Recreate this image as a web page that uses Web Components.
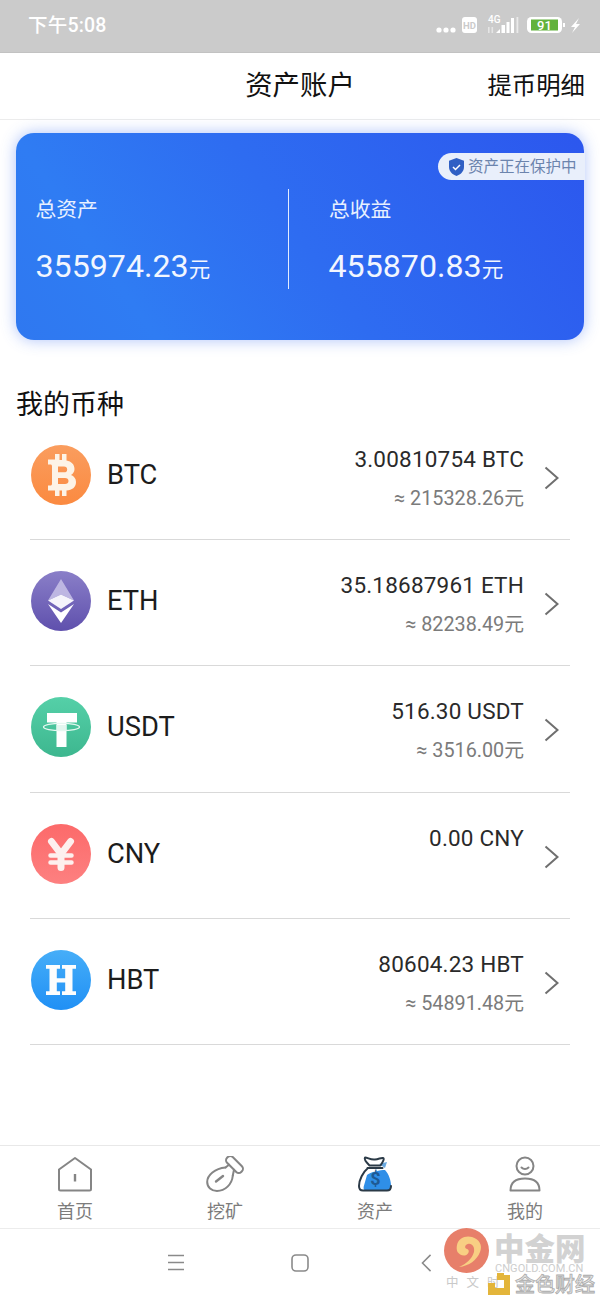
<!DOCTYPE html>
<html lang="zh"><head><meta charset="utf-8"><title>资产账户</title>
<style>
html,body{margin:0;padding:0;background:#fff}
body{width:600px;height:1300px;overflow:hidden;position:relative;font-family:Roboto,"Noto Sans CJK SC",sans-serif;color:#1d1d1d}
</style></head><body>
<status-bar></status-bar>
<app-header></app-header>
<asset-card></asset-card>
<section-title>我的币种</section-title>
<coin-list>
<coin-row name="BTC" amount="3.00810754 BTC" approx="≈ 215328.26元">
<svg slot="icon" viewBox="0 0 60 60" width="60" height="60"><defs><linearGradient id="g1" x1="0" y1="0" x2="0" y2="1"><stop offset="0" stop-color="#fa9d5e"/><stop offset="1" stop-color="#fb8a40"/></linearGradient></defs><circle cx="30" cy="30" r="30" fill="url(#g1)"/><path fill="#fdf3e6" fill-rule="evenodd" d="M24 9h4.500v6h2.500V9h4.500v6.500c5 1 8 4 8 8.500 0 2.800-1.500 4.800-3.500 6 3 1.200 5 3.500 5 7 0 5.500-4 8-9.500 8.500V51H31v-5.500h-2.500V51H24v-5.500h-7v-5h2.500c.8 0 1.500-.7 1.500-1.500V21c0-.8-.7-1.500-1.500-1.500H17v-5h7zM27 21.500v5.800h6c2 0 3.200-1 3.200-2.900s-1.200-2.900-3.200-2.900zM27 33v6h7c2.200 0 3.500-1.200 3.500-3s-1.300-3-3.500-3z"/></svg>
</coin-row>
<coin-row name="ETH" amount="35.18687961 ETH" approx="≈ 82238.49元">
<svg slot="icon" viewBox="0 0 60 60" width="60" height="60"><defs><linearGradient id="g2" x1="0" y1="0" x2="0" y2="1"><stop offset="0" stop-color="#8a7fc8"/><stop offset="1" stop-color="#5f50ad"/></linearGradient></defs><circle cx="30" cy="30" r="30" fill="url(#g2)"/><path fill="#bdb6e2" d="M30 8 17 29.500 30 23.500 43 29.500z"/><path fill="#f5f4fb" d="M30 23.500 17 29.500 30 38 43 29.500z"/><path fill="#fff" d="M17 33 30 41.500 43 33 30 52z"/></svg>
</coin-row>
<coin-row name="USDT" amount="516.30 USDT" approx="≈ 3516.00元">
<svg slot="icon" viewBox="0 0 60 60" width="60" height="60"><defs><linearGradient id="g3" x1="0" y1="0" x2="0" y2="1"><stop offset="0" stop-color="#55d0a8"/><stop offset="1" stop-color="#3db78f"/></linearGradient></defs><circle cx="30" cy="30" r="30" fill="url(#g3)"/><path fill="#fff" d="M16 16h30v9.500H35.500V50h-10V25.500H16z"/><ellipse cx="30.500" cy="30" rx="18" ry="3.700" fill="none" stroke="#e6f8f1" stroke-width="1.300"/><path fill="#e3f6ef" d="M25.500 28h10v5h-10z"/></svg>
</coin-row>
<coin-row name="CNY" amount="0.00 CNY">
<svg slot="icon" viewBox="0 0 60 60" width="60" height="60"><defs><linearGradient id="g4" x1="0" y1="0" x2="0" y2="1"><stop offset="0" stop-color="#fc6a6a"/><stop offset="1" stop-color="#fd8080"/></linearGradient></defs><circle cx="30" cy="30" r="30" fill="url(#g4)"/><path fill="none" stroke="#fdf0ee" stroke-width="7" stroke-linecap="round" stroke-linejoin="round" d="M20.500 17.500 30 30l9.500-12.500M30 30v13.500"/><path fill="none" stroke="#fdf0ee" stroke-width="4.500" stroke-linecap="round" d="M19.500 31.500h21M19.500 38.500h21"/></svg>
</coin-row>
<coin-row name="HBT" amount="80604.23 HBT" approx="≈ 54891.48元">
<svg slot="icon" viewBox="0 0 60 60" width="60" height="60"><defs><linearGradient id="g5" x1="0" y1="0" x2="0" y2="1"><stop offset="0" stop-color="#46aef8"/><stop offset="1" stop-color="#2090f5"/></linearGradient></defs><circle cx="30" cy="30" r="30" fill="url(#g5)"/><path fill="#fdfdfd" d="M15 15h14v3.800h-3.200v9.400h8.400v-9.400H31V15h14v3.800h-3.500v22.400H45V45H31v-3.800h3.200v-8.600h-8.400v8.600H29V45H15v-3.800h3.500V18.800H15z"/></svg>
</coin-row>
</coin-list>
<tab-bar>
<tab-item label="首页"><svg slot="icon" viewBox="0 0 36 36" width="36" height="36" fill="none" stroke="#858585" stroke-width="2" stroke-linejoin="round"><path d="M2 13.500 18 2l16 11.500V33a1.500 1.500 0 0 1-1.500 1.500h-29A1.500 1.500 0 0 1 2 33z"/><path d="M18 18v7.500" stroke-width="2.400"/></svg></tab-item>
<tab-item label="挖矿"><svg slot="icon" viewBox="0 0 38 36" width="38" height="36" fill="none" stroke="#858585" stroke-width="2" stroke-linejoin="round" stroke-linecap="round"><path d="M19.500 11.500C9 12.500 1.200 19 1.200 26c0 5.500 4.300 9 9.800 9 8 0 15-6.500 15.800-15.500"/><path d="M19.500 11.500 23 8.700M26.800 19.500 28 13.700"/><rect x="18.500" y="4.500" width="20" height="8" rx="3.500" transform="rotate(45 28.500 8.500)"/><path d="M17 20l-7 5.500" stroke-width="2.400"/></svg></tab-item>
<tab-item label="资产"><svg slot="icon" viewBox="0 0 34 36" width="34" height="36"><path fill="#2f8fe8" d="M9 19c3-3 14-5 18-5 4 4 6 11 6 16 0 3-2 4.500-4 4.500H8c-2 0-3-2-2-5z"/><path fill="#6aa9e0" d="M21 8l8-2-2 6z"/><path fill="none" stroke="#2b3a47" stroke-width="2" stroke-linejoin="round" d="M7 1.500c3 0 5 2.500 10 2 4-.4 6-2 8-1.500 1.500.400.500 3-2.500 7.500h-11C9 7 6 3 7 1.500z"/><path fill="none" stroke="#2b3a47" stroke-width="2" stroke-linecap="round" d="M9.500 12h15M10 12C5 16 1 24 1 30c0 3 1.500 4.500 4 4.500h24c2.500 0 4-1.500 4-4.500"/><text x="17.500" y="29" text-anchor="middle" font-family="Roboto" font-weight="700" font-size="18" fill="#1f5a94">$</text></svg></tab-item>
<tab-item label="我的"><svg slot="icon" viewBox="0 0 32 36" width="32" height="36" fill="none" stroke="#858585" stroke-width="2" stroke-linecap="round"><circle cx="16" cy="10" r="8.500"/><path d="M12.500 11.500c2 2 5 2 7 0"/><path d="M1.500 34.500c0-8 5-12 14.500-12s14.500 4 14.500 12z" stroke-linejoin="round"/></svg></tab-item>
</tab-bar>
<nav-bar></nav-bar>
<water-mark></water-mark>
<script>
const def=(name,css,html)=>{customElements.define(name,class extends HTMLElement{
  constructor(){super();this.attachShadow({mode:'open'}).innerHTML=`<style>${css}</style>${typeof html==='function'?html(this):html}`;}
});};
def('status-bar',`:host{display:flex;align-items:center;justify-content:space-between;background:#cbcbcb;border-bottom:1px solid #c2c2c2;padding:0 18px 2px 28px;box-sizing:border-box;height:53px;color:#fff}
.t{font:500 19.500px Roboto,"Noto Sans CJK SC",sans-serif;letter-spacing:.2px;margin-bottom:4px}
svg{display:block}`,
`<span class="t">下午5:08</span><svg width="148" height="24" viewBox="0 0 148 24">
<g fill="#fff"><circle cx="5" cy="17" r="2.600"/><circle cx="12" cy="17" r="2.600"/><circle cx="19" cy="17" r="2.600"/>
<rect x="28" y="4" width="15" height="16" rx="3"/>
<rect x="54" y="14" width="1.600" height="6" opacity=".5"/><rect x="57.500" y="14" width="1.600" height="6" opacity=".5"/>
<path d="M62 20l4-4v4z"/><rect x="67.500" y="12" width="3.500" height="8"/><rect x="72.500" y="9" width="3" height="11"/><rect x="77" y="5" width="3" height="15"/><rect x="82.500" y="4" width="1.800" height="16" opacity=".6"/>
<rect x="129" y="10" width="2" height="4"/><path d="M145 5l-8 9h4l-3 6 8-9h-4z"/></g>
<text x="35.500" y="15.500" text-anchor="middle" font-family="Roboto" font-weight="700" font-size="9.500" fill="#cbcbcb">HD</text>
<text x="54" y="10" font-family="Roboto" font-weight="500" font-size="10" fill="#fff">4G</text>
<rect x="93" y="4" width="35" height="16" rx="4.500" fill="#fff"/><rect x="97" y="6.500" width="27" height="11" fill="#62b23c"/><text x="110.500" y="16.500" text-anchor="middle" font-family="Roboto" font-weight="500" font-size="13" fill="#fff">91</text></svg>`);
def('app-header',`:host{display:grid;grid-template-columns:1fr auto 1fr;align-items:center;height:67px;background:#fff;border-bottom:1px solid #ececec;box-sizing:border-box;padding:0 15px 6px;font-family:"Noto Sans CJK SC",sans-serif;color:#111}
h1{margin:0;font:inherit;font-size:27.400px}.a{grid-column:3;justify-self:end;font-size:24.400px}`,
`<span></span><h1>资产账户</h1><span class="a">提币明细</span>`);
def('asset-card',`:host{display:block;position:relative;margin:13px 16px 0;height:207px;border-radius:18px;background:linear-gradient(235deg,#2c57ee 0%,#2e6cf1 50%,#2f7cf3 80%,#2f78f0 100%);box-shadow:0 0 15px rgba(60,110,240,.42);color:#fff;font-family:Roboto,"Noto Sans CJK SC",sans-serif}
.wrap{display:grid;grid-template-columns:272px 1fr;height:100%;align-items:center}
.col{padding:60px 0 48px 19.500px;box-sizing:border-box;height:100%}
.col+.col{position:relative;padding-left:41px}
.col+.col::before{content:"";position:absolute;left:0;top:56px;height:100px;width:1px;background:#e3ecff}
.l{font-size:20.800px;line-height:30px;color:#e8f0ff;font-family:"Noto Sans CJK SC",sans-serif}
.v{font-size:32.200px;line-height:40px;margin-top:23px;white-space:nowrap;color:#f2f6ff}
.col+.col .v{margin-left:-.5px}
.v small{font-size:21.500px;font-family:"Noto Sans CJK SC",sans-serif}
.badge{position:absolute;right:-1px;top:20px;height:27px;width:147px;box-sizing:border-box;background:#e9effb;border-radius:14px 0 0 14px;display:flex;align-items:center;padding:0 0 0 11px;gap:4px;color:#6c84ad;font:15.500px/20px "Noto Sans CJK SC",sans-serif;white-space:nowrap}
.badge span{margin-bottom:3px}`,
`<div class="wrap"><div class="col"><div class="l">总资产</div><div class="v">355974.23<small>元</small></div></div>
<div class="col"><div class="l">总收益</div><div class="v">455870.83<small>元</small></div></div></div>
<div class="badge"><svg width="15" height="18" viewBox="0 0 15 18"><path fill="#2f5fc4" d="M7.500 0 15 2.800V9c0 4.300-3.200 7.500-7.500 9C3.200 16.500 0 13.300 0 9V2.800z"/><path fill="none" stroke="#fff" stroke-width="1.500" d="M4 9l2.500 2.500L11 7"/></svg><span>资产正在保护中</span></div>`);
def('section-title',`:host{display:block;margin:47px 0 0 16px;font:27px/31px "Noto Sans CJK SC",sans-serif;color:#111;height:26.500px}`,`<slot></slot>`);
def('coin-list',`:host{display:block}`,`<slot></slot>`);
def('coin-row',`:host{display:block;height:126.400px;font-family:Roboto,"Noto Sans CJK SC",sans-serif}
.in{margin:0 30px;height:100%;box-sizing:border-box;border-bottom:1px solid #d9d9d9;display:grid;grid-template-columns:60px 1fr auto 46px;align-items:start}
.ic{margin:31px 0 0 1px;width:60px;height:60px}
.n{margin:45px 0 0 17px;font-size:27.300px;line-height:32px;color:#1c1c1c}
.r{text-align:right;padding-top:29px}
.a{font-size:22.500px;line-height:32px;color:#2a2a2a;letter-spacing:.2px;white-space:nowrap}
.b{font-size:19.800px;line-height:30px;margin-top:9px;color:#7b7b7b;white-space:nowrap}
.c{margin:0 0 0 20px;padding-top:52px}`,
h=>`<div class="in"><div class="ic"><slot name="icon"></slot></div><div class="n">${h.getAttribute('name')}</div><div class="r"><div class="a">${h.getAttribute('amount')}</div>${h.hasAttribute('approx')?`<div class="b">${h.getAttribute('approx')}</div>`:''}</div><div class="c"><svg width="15" height="24" viewBox="0 0 15 24" fill="none" stroke="#6f6f6f" stroke-width="2"><path d="M1.500 1.500 13.500 12 1.500 22.500"/></svg></div></div>`);
def('tab-bar',`:host{position:absolute;left:0;right:0;top:1145px;height:84px;box-sizing:border-box;display:grid;grid-template-columns:repeat(4,150px);background:#fff;border-top:1px solid #e8e8e8;border-bottom:1px solid #ececec}`,`<slot></slot>`);
def('tab-item',`:host{display:flex;flex-direction:column;align-items:center;padding-top:10px}
.i{height:36px;display:flex;align-items:center}
.t{font:18px/24px "Noto Sans CJK SC",sans-serif;color:#7c7c7c;margin-top:6px}`,
h=>`<div class="i"><slot name="icon"></slot></div><div class="t">${h.getAttribute('label')}</div>`);
def('nav-bar',`:host{position:absolute;left:0;right:0;top:1229px;height:71px;background:#fff;display:grid;grid-template-columns:repeat(3,125px);justify-content:center;justify-items:center;padding-top:25px;box-sizing:border-box}svg{display:block}`,
`<svg width="18" height="17" viewBox="0 0 18 17" stroke="#8a8a8a" stroke-width="1.600" style="margin-left:2px"><path d="M1 1.500h16M1 8.500h16M1 15.500h16"/></svg>
<svg width="18" height="18" viewBox="0 0 18 18" fill="none" stroke="#8a8a8a" stroke-width="1.600"><rect x="1" y="1" width="16" height="16" rx="4"/></svg>
<svg width="13" height="18" viewBox="0 0 13 20" fill="none" stroke="#8a8a8a" stroke-width="1.700" style="margin-left:2px"><path d="M11 1 2 10l9 9"/></svg>`);
def('water-mark',`:host{position:absolute;left:0;top:0;width:600px;height:1300px;pointer-events:none;display:block;font-family:"Noto Sans CJK SC",sans-serif}
.abs{position:absolute;white-space:nowrap}
.big{left:494px;top:1225px;font:900 30.500px/44px "Noto Sans CJK SC",sans-serif;color:#d2d2d2}
.en{left:495px;top:1263px;font:11px/11px Roboto,sans-serif;color:#cdcdcd;letter-spacing:.05px}
.zh{left:446px;top:1275px;font:12.500px/14px "Noto Sans CJK SC",sans-serif;color:#c9c9c9;letter-spacing:8px}
.jin{left:515px;top:1274px;font:500 20px/20px "Noto Sans CJK SC",sans-serif;color:#e6e6e6;-webkit-text-stroke:.8px #ababab}`,
`<svg class="abs" style="left:444px;top:1228px" width="45" height="45" viewBox="0 0 45 45"><circle cx="22.500" cy="22.500" r="22.500" fill="#e77f6a"/><path fill="#f8cf83" d="M13 17c1-7 9-10 15-8 7 2 11 8 8 15-3 8-11 14-21 15 7-3 13-8 15-15 1-5-2-9-6-8-3 .6-4 4-1 5 2 .7 2.500 3 .5 5-3 3-8 1-10-2-1-2-1-5-.5-7z"/></svg>
<span class="abs big">中金网</span><span class="abs en">CNGOLD.COM.CN</span><span class="abs zh">中文时</span>
<svg class="abs" style="left:488px;top:1273px" width="23" height="22" viewBox="0 0 23 22"><path fill="#e3b53b" d="M9 0h7v2h6v20H0V10h7v5h9V7H9z"/></svg>
<span class="abs jin">金色财经</span>`);
</script>
</body></html>
